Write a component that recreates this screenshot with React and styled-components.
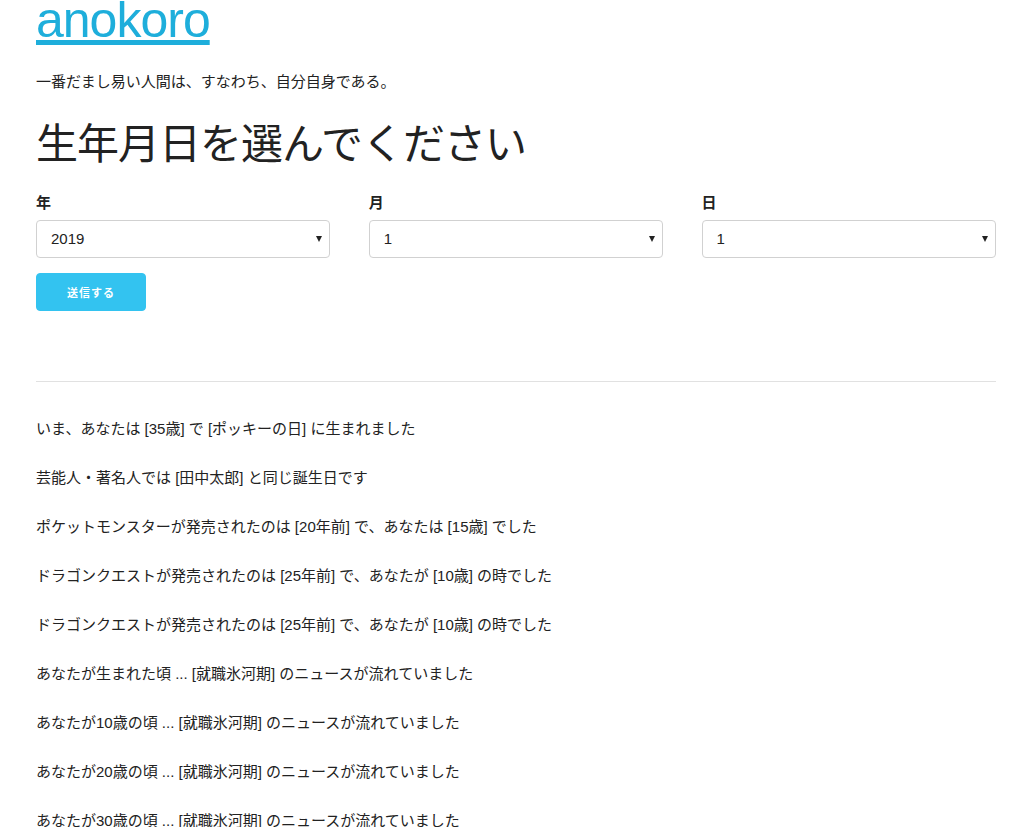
import React from "react";
import styled, { createGlobalStyle } from "styled-components";

const GlobalStyle = createGlobalStyle`
  html, body {
    margin: 0;
    padding: 0;
    background: #fff;
    overflow: hidden;
  }
  body {
    font-family: "Liberation Sans", "Noto Sans CJK JP", sans-serif;
    font-size: 15px;
    line-height: 1.6;
    color: #222;
  }
`;

const Container = styled.div`
  width: 960px;
  padding-left: 36px;
  box-sizing: content-box;
`;

const Title = styled.h1`
  margin: -10px 0 20px;
  font-size: 50px;
  line-height: 1.2;
  font-weight: 400;
  letter-spacing: -1px;

  a {
    color: #1eaedb;
    text-decoration: underline;
  }
`;

const Lead = styled.p`
  margin: 0 0 25px;
`;

const Heading = styled.h2`
  margin: 0 0 19px;
  font-size: 42px;
  line-height: 1.25;
  font-weight: 400;
  letter-spacing: -1px;
`;

const Row = styled.div`
  display: grid;
  grid-template-columns: repeat(3, 1fr);
  column-gap: 38.4px;
`;

const Field = styled.div`
  display: flex;
  flex-direction: column;
`;

const Label = styled.label`
  display: block;
  font-weight: 700;
  margin-bottom: 5px;
`;

const SelectWrap = styled.div`
  position: relative;
  margin-bottom: 15px;
`;

const Select = styled.select`
  appearance: none;
  -webkit-appearance: none;
  width: 100%;
  height: 38px;
  padding: 6px 14px;
  box-sizing: border-box;
  border: 1px solid #d1d1d1;
  border-radius: 4px;
  background: #fff;
  font-family: inherit;
  font-size: 15px;
  color: #222;
  outline: none;
`;

const Arrow = styled.span`
  position: absolute;
  right: 8px;
  top: 16px;
  width: 0;
  height: 0;
  border-left: 3px solid transparent;
  border-right: 3px solid transparent;
  border-top: 6px solid #222;
  pointer-events: none;
`;

const Button = styled.button`
  display: block;
  height: 38px;
  padding: 0 30px;
  border: 1px solid #33c3f0;
  border-radius: 4px;
  background: #33c3f0;
  color: #fff;
  font-family: inherit;
  font-size: 11px;
  font-weight: 700;
  letter-spacing: 1px;
  line-height: 38px;
  cursor: pointer;
`;

const Rule = styled.hr`
  margin: 70px 0 35px;
  border: 0;
  border-top: 1px solid #e1e1e1;
`;

const Line = styled.p`
  margin: 0 0 25px;
  color: #222;
`;

const years = Array.from({ length: 100 }, (_, i) => 2019 - i);
const months = Array.from({ length: 12 }, (_, i) => i + 1);
const days = Array.from({ length: 31 }, (_, i) => i + 1);

const fields = [
  { label: "年", options: years },
  { label: "月", options: months },
  { label: "日", options: days },
];

const lines = [
  "いま、あなたは [35歳] で [ポッキーの日] に生まれました",
  "芸能人・著名人では [田中太郎] と同じ誕生日です",
  "ポケットモンスターが発売されたのは [20年前] で、あなたは [15歳] でした",
  "ドラゴンクエストが発売されたのは [25年前] で、あなたが [10歳] の時でした",
  "ドラゴンクエストが発売されたのは [25年前] で、あなたが [10歳] の時でした",
  "あなたが生まれた頃 ... [就職氷河期] のニュースが流れていました",
  "あなたが10歳の頃 ... [就職氷河期] のニュースが流れていました",
  "あなたが20歳の頃 ... [就職氷河期] のニュースが流れていました",
  "あなたが30歳の頃 ... [就職氷河期] のニュースが流れていました",
];

const App = () => {
  return (
    <Container>
      <GlobalStyle />
      <Title>
        <a href="#">anokoro</a>
      </Title>
      <Lead>一番だまし易い人間は、すなわち、自分自身である。</Lead>
      <Heading>生年月日を選んでください</Heading>
      <form onSubmit={(e) => e.preventDefault()}>
        <Row>
          {fields.map((f) => (
            <Field key={f.label}>
              <Label>{f.label}</Label>
              <SelectWrap>
                <Select defaultValue={f.options[0]}>
                  {f.options.map((o) => (
                    <option key={o} value={o}>
                      {o}
                    </option>
                  ))}
                </Select>
                <Arrow />
              </SelectWrap>
            </Field>
          ))}
        </Row>
        <Button type="submit">送信する</Button>
      </form>
      <Rule />
      {lines.map((l, i) => (
        <Line key={i}>{l}</Line>
      ))}
    </Container>
  );
};

export default App;
